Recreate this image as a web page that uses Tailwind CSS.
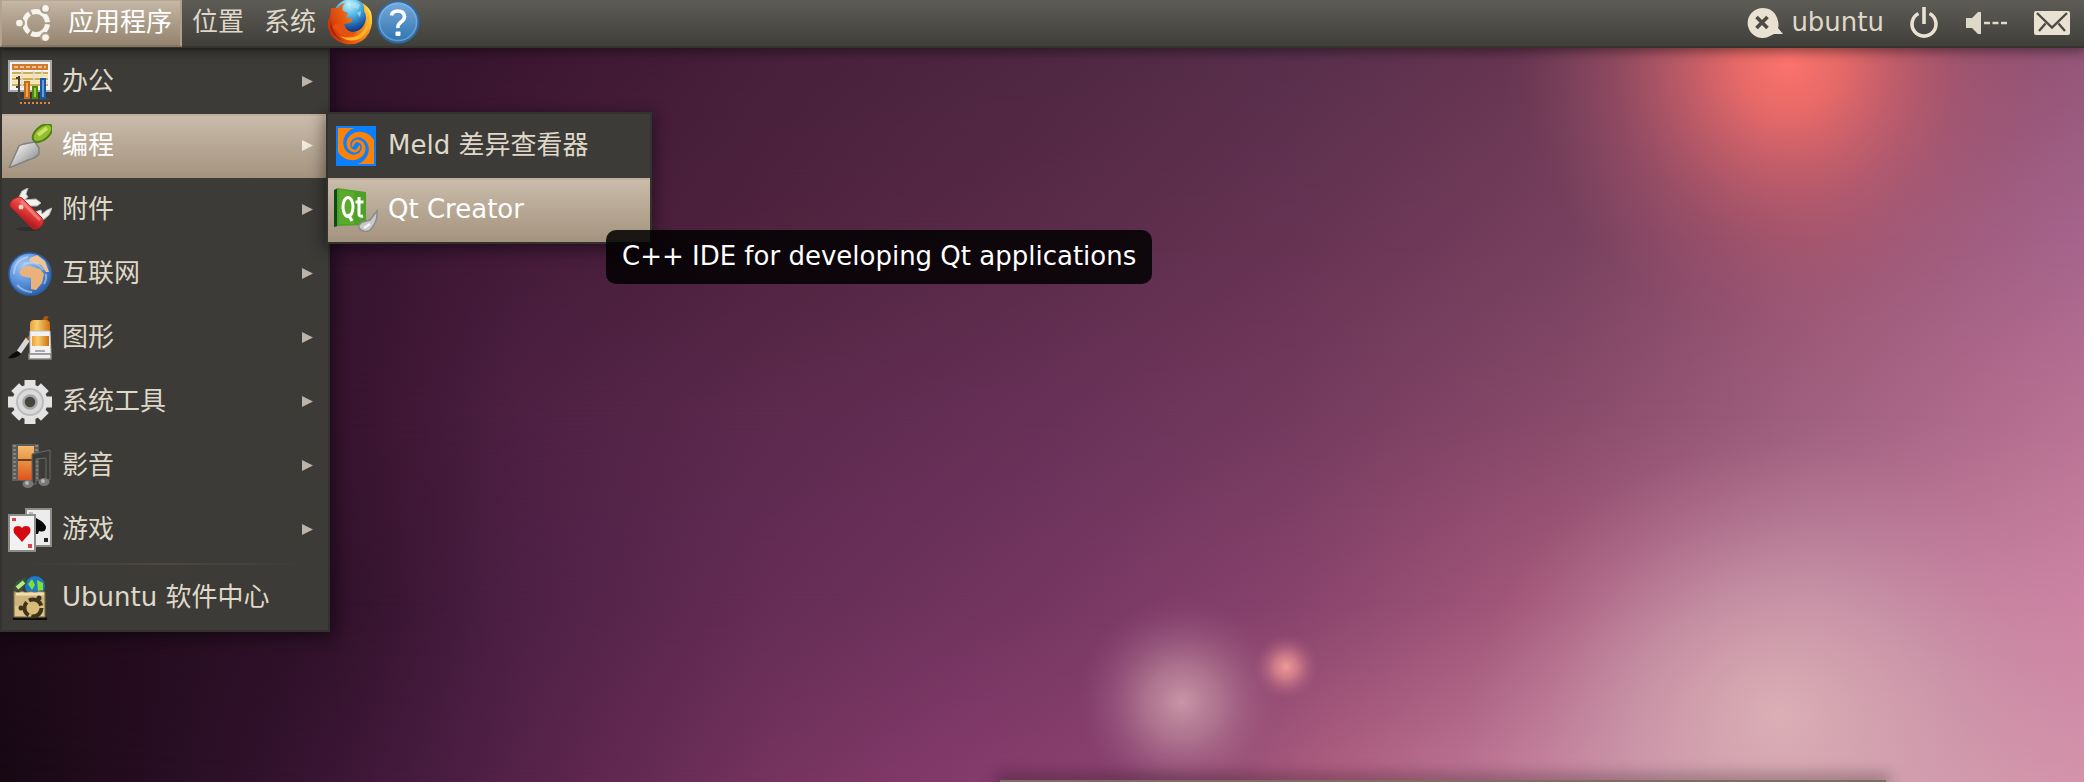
<!DOCTYPE html>
<html lang="zh-CN">
<head>
<meta charset="utf-8">
<title>Ubuntu</title>
<script src="https://cdn.jsdelivr.net/npm/@tailwindcss/browser@4"></script>
</head>
<body class="relative flex min-h-screen flex-col overflow-hidden bg-[#1a0a15] font-['DejaVu_Sans','Noto_Sans_CJK_SC',sans-serif] text-[26px] leading-8 text-[#dfd8c8]">

<!-- wallpaper: horizontal colour bands that fade into each other downwards -->
<div class="absolute inset-0" aria-hidden="true">
  <div class="absolute inset-0 bg-[linear-gradient(90deg,#260d20_0%,#30112a_16%,#3c1731_25%,#47203c_37%,#4f2742_50%,#582f4c_62%,#653450_72%,#804860_80%,#8c4c68_90%,#955578_100%)]"></div>
  <div class="absolute inset-0 bg-[linear-gradient(90deg,#260d20_0%,#34132d_16%,#441b39_25%,#50233f_37%,#5a2b49_50%,#663353_62%,#76405e_75%,#9a5470_87%,#a5648c_100%)] [mask-image:linear-gradient(180deg,transparent_6%,black_30%)]"></div>
  <div class="absolute inset-0 bg-[linear-gradient(90deg,#230c1e_0%,#36132e_16%,#4e2042_25%,#5c2a4d_37%,#673157_50%,#743a5e_62%,#884a6a_75%,#a06080_87%,#b97294_100%)] [mask-image:linear-gradient(180deg,transparent_30%,black_53%)]"></div>
  <div class="absolute inset-0 bg-[linear-gradient(90deg,#1c0917_0%,#30112a_16%,#4e2045_25%,#652d57_37%,#753662_50%,#87436c_62%,#a5597b_74%,#bb7c98_87%,#cd84a3_100%)] [mask-image:linear-gradient(180deg,transparent_53%,black_77%)]"></div>
  <div class="absolute inset-0 bg-[linear-gradient(90deg,#170813_0%,#32122d_13%,#55224a_25%,#75335f_37%,#843b6c_46%,#8b4370_54%,#b06082_64%,#c4809c_74%,#d8a2b0_85%,#d393aa_100%)] [mask-image:linear-gradient(180deg,transparent_77%,black_100%)]"></div>
  <svg class="absolute inset-0 size-full" viewBox="0 0 2084 782" preserveAspectRatio="none">
    <defs>
      <radialGradient id="glowRed"><stop offset="0" stop-color="#fc736b"/><stop offset=".2" stop-color="#f26d68" stop-opacity=".88"/><stop offset=".4" stop-color="#df666a" stop-opacity=".62"/><stop offset=".65" stop-color="#c45c6a" stop-opacity=".3"/><stop offset="1" stop-color="#a8546a" stop-opacity="0"/></radialGradient>
      <radialGradient id="glowPale"><stop offset="0" stop-color="#dcb0b6" stop-opacity=".95"/><stop offset=".45" stop-color="#d0a3b0" stop-opacity=".58"/><stop offset=".75" stop-color="#c998aa" stop-opacity=".2"/><stop offset="1" stop-color="#c58fa6" stop-opacity="0"/></radialGradient>
      <radialGradient id="orb"><stop offset="0" stop-color="#c896a6"/><stop offset=".35" stop-color="#b98299" stop-opacity=".75"/><stop offset=".7" stop-color="#a4678a" stop-opacity=".35"/><stop offset="1" stop-color="#8f4c78" stop-opacity="0"/></radialGradient>
      <radialGradient id="spark"><stop offset="0" stop-color="#f09a98"/><stop offset=".35" stop-color="#e08a90" stop-opacity=".75"/><stop offset="1" stop-color="#a8587e" stop-opacity="0"/></radialGradient>
    </defs>
    <ellipse cx="1788" cy="62" rx="265" ry="270" fill="url(#glowRed)"/>
    <ellipse cx="1780" cy="715" rx="310" ry="270" fill="url(#glowPale)"/>
    <ellipse cx="1182" cy="702" rx="105" ry="105" fill="url(#orb)"/>
    <circle cx="1286" cy="667" r="33" fill="url(#spark)"/>
  </svg>
</div>

<header class="relative z-30 flex h-12 items-center justify-between border-b-2 border-[#35342f] bg-linear-to-b from-[#5d5c56] to-[#403f3a] shadow-[0_2px_10px_2px_rgba(0,0,0,0.4)]">
  <nav class="flex h-12 items-center" aria-label="面板">
    <button class="flex h-12 items-center gap-4 border-2 border-r-[#b09f89] border-b-[#85765f] border-l-[#b3a38c] border-t-[#b8a892] bg-linear-to-b from-[#c5b7a5] to-[#93836f] pr-2 pl-3.5 whitespace-nowrap text-white">
      <svg class="size-9" viewBox="0 0 36 36">
        <circle cx="20" cy="18" r="11.500" fill="none" stroke="#f7f4ee" stroke-width="5" stroke-dasharray="21.580 2.500" stroke-dashoffset="-1.250"/>
        <g fill="#ada08d"><circle cx="4" cy="18" r="5"/><circle cx="29" cy="4" r="5"/><circle cx="29" cy="32" r="5"/></g>
        <g fill="#f7f4ee"><circle cx="3.400" cy="18" r="3.300"/><circle cx="29.500" cy="3.400" r="3.300"/><circle cx="29.500" cy="32.600" r="3.300"/></g>
      </svg>
      <span class="pb-0.5">应用程序</span>
    </button>
    <button class="px-[10px] pb-0.5 whitespace-nowrap">位置</button>
    <button class="px-[10px] pb-0.5 whitespace-nowrap">系统</button>
    <button class="pb-0.5" aria-label="Firefox">
      <svg class="size-12" viewBox="0 0 48 48">
        <defs>
          <radialGradient id="ffGlobe" cx=".45" cy=".15" r=".85"><stop offset="0" stop-color="#c9f3fb"/><stop offset=".35" stop-color="#55bbe6"/><stop offset=".7" stop-color="#1e62ae"/><stop offset="1" stop-color="#0c1f5c"/></radialGradient>
          <linearGradient id="ffFur" x1="0" y1=".7" x2="1" y2=".3"><stop offset="0" stop-color="#c72f06"/><stop offset=".45" stop-color="#ea5f12"/><stop offset=".8" stop-color="#f79a1e"/><stop offset="1" stop-color="#ffe14d"/></linearGradient>
        </defs>
        <circle cx="25" cy="19" r="18" fill="url(#ffGlobe)"/>
        <path d="M5 10 4 19Q1 24 2 29 5 43 20 46 36 48 43 35 48 25 45 14 42 8 36 5 39 9 38 13 42 19 38 27 34 34 26 34 17 33 18 26L24 25Q27 23 26 21L20 19 22 15 17 13Q15 9 19 5 14 6 12 10 8 10 5 10Z" fill="url(#ffFur)"/>
        <path d="M41 13Q44 28 34 36 26 42 14 38 24 46 35 40 46 31 43 17Z" fill="#fbb32a"/>
        <path d="M5 20Q4 34 17 43 7 39 4 29Z" fill="#a91f05"/>
        <path d="M18 26Q12 24 7 28 10 35 19 38 27 39 31 34 21 36 18 26Z" fill="#e8520f"/>
        <path d="M24 4Q30 3 34 7L32 11 26 9ZM31 15 35 13 34 19Z" fill="#aee6f7" opacity=".7"/>
      </svg>
    </button>
    <button class="pb-0.5" aria-label="帮助">
      <svg class="h-11 w-12" viewBox="0 0 48 44">
        <defs><linearGradient id="helpFill" x1="0" y1="0" x2="0" y2="1"><stop offset="0" stop-color="#78aadd"/><stop offset="1" stop-color="#2d74ad"/></linearGradient></defs>
        <circle cx="24" cy="22" r="20.500" fill="url(#helpFill)" stroke="#2c6aa5" stroke-width="2"/>
        <circle cx="24" cy="22" r="18.600" fill="none" stroke="#8fbbe6" stroke-opacity=".5" stroke-width="1.600"/>
        <path d="M17.500 15.500Q18 11 24 11T30.500 16.500Q30.500 19.500 27 22T24 28" fill="none" stroke="#fff" stroke-width="3.600"/>
        <rect x="21.500" y="31.500" width="5" height="4.500" rx="1" fill="#fff"/>
      </svg>
    </button>
  </nav>

  <div class="flex h-12 items-center pr-3.5 text-[#dfd8c8]">
    <button class="flex items-center gap-2">
      <svg class="h-8 w-9" viewBox="0 0 36 32"><path d="M15 1A15 15 0 1 0 21 30Q25 28 27 27H36L31 21Q32 18 31 14 28 1 15 1Z" fill="#e9e2d2"/><path d="m9.500 10 11 11m0-11-11 11" stroke="#4b4a44" stroke-width="3.600"/></svg>
      <span class="pb-0.5">ubuntu</span>
    </button>
    <button class="ml-6" aria-label="关机">
      <svg class="h-8 w-8" viewBox="0 0 32 32" fill="none" stroke="#e9e2d2" stroke-width="3.600"><path d="M10.500 6.500A12 12 0 1 0 21.500 6.500"/><path d="M16 0V17"/></svg>
    </button>
    <button class="ml-[26px]" aria-label="音量">
      <svg class="h-6 w-11" viewBox="0 0 44 24"><path d="M0 7H6L12 1H15V23H12L6 17H0Z" fill="#dfd8c8"/><path d="M18 12H41" stroke="#dfd8c8" stroke-width="2.500" stroke-dasharray="6 2.500"/></svg>
    </button>
    <button class="ml-6" aria-label="邮件">
      <svg class="h-6 w-9" viewBox="0 0 36 24"><rect width="36" height="24" rx="2" fill="#e9e2d2"/><path d="m3 2 15 14.500L33 2M5 20l6.500-7.500M31 20l-6.500-7.500" fill="none" stroke="#4b4a44" stroke-width="2.400"/></svg>
    </button>
  </div>
</header>

<main class="relative z-20 flex-1">
  <ul role="menu" class="relative w-[330px] border-2 border-[#33322e] bg-[#3c3b37] shadow-[2px_4px_14px_2px_rgba(0,0,0,0.45)]">
    <li role="none"><button role="menuitem" class="flex h-16 w-full items-center gap-2.5 pr-3.5 pl-1.5">
      <svg class="size-11" viewBox="0 0 44 44"><rect x="1" y="1" width="42" height="30" fill="#f4f4f2" stroke="#a9a9a9" stroke-width="2"/><rect x="4" y="4" width="36" height="6" fill="#d07a30"/><path d="M6 7h32" stroke="#ecc096" stroke-width="2" stroke-dasharray="4 2"/><path d="M4 13h36M4 19h36M4 25h36" stroke="#c9ae55" stroke-width="2"/><path d="M4 16h36M4 22h36" stroke="#fbe0a8" stroke-width="3"/><path d="M14 10v18M26 10v12M34 10v8" stroke="#ddd" stroke-width="1.500"/><path d="M11 16v23h31M8 18h3M8 27h3M8 35h3" fill="none" stroke="#44443f" stroke-width="2"/><path d="M17 22h4v16h-4z" fill="#f0a850" stroke="#c96a18" stroke-width="2"/><path d="M25 27h4v11h-4z" fill="#9ac840" stroke="#4a8a10" stroke-width="2"/><path d="M33 19h4v19h-4z" fill="#6c9cd8" stroke="#1858a8" stroke-width="2"/><path d="M12 43h30" stroke="#d98a40" stroke-width="2" stroke-dasharray="2 2"/></svg>
      <span class="pb-0.5">办公</span><svg class="ml-auto size-3" viewBox="0 0 12 12"><path d="M0 0 11 5.500 0 11Z" fill="#bcb5a7"/></svg>
    </button></li>
    <li role="none"><button role="menuitem" aria-expanded="true" class="flex h-16 w-[324px] items-center gap-2.5 bg-linear-to-b from-[#cbbdac] to-[#a3937e] pr-3 pl-1.5 text-white shadow-[inset_0_2px_#bfae9b]">
      <svg class="size-11" viewBox="0 0 44 44"><defs><linearGradient id="blade" x1="0" y1="0" x2="1" y2="1"><stop offset=".2" stop-color="#eee"/><stop offset="1" stop-color="#777"/></linearGradient></defs><path d="M29 20 27 12" stroke="#999" stroke-width="3"/><path d="M1 44 11 22Q13 20 27 18L31 24V30Q28 34 20 36Z" fill="url(#blade)" stroke="#808080" stroke-width="1.500"/><ellipse cx="34.500" cy="9" rx="11.500" ry="6.500" transform="rotate(-40 34.500 9)" fill="#93bf2c" stroke="#4f7f12" stroke-width="2"/><path d="m30 11 9-7" stroke="#cbe26a" stroke-width="4"/></svg>
      <span class="pb-0.5">编程</span><svg class="ml-auto size-3" viewBox="0 0 12 12"><path d="M0 0 11 5.500 0 11Z" fill="#eee9e0"/></svg>
    </button></li>
    <li role="none"><button role="menuitem" class="flex h-16 w-full items-center gap-2.5 pr-3.5 pl-1.5">
      <svg class="size-11" viewBox="0 0 44 44"><defs><linearGradient id="knife" x1=".7" y1=".2" x2=".3" y2=".8"><stop offset="0" stop-color="#f06a60"/><stop offset=".5" stop-color="#dc3434"/><stop offset="1" stop-color="#9c1018"/></linearGradient></defs><ellipse cx="20" cy="41" rx="12" ry="2" fill="#31302c"/><path d="M11 9 14 3 20 0 18 6 20 9 15 13ZM15 12 28 11 33 15 29 18 20 18ZM27 24 33 22 34 26 39 22 44 20 41 27 34 33Z" fill="#f1f1f1" stroke="#b5b5b5"/><path d="M8 10Q2 12 2 18L24 40Q29 43 33 38 37 34 34 30L14 10Q11 8 8 10Z" fill="url(#knife)" stroke="#c02026"/><path d="m13 13 19 19" stroke="#f69088" stroke-width="3" opacity=".7"/><circle cx="13" cy="19" r="2.500" fill="#fbd0c8"/></svg>
      <span class="pb-0.5">附件</span><svg class="ml-auto size-3" viewBox="0 0 12 12"><path d="M0 0 11 5.500 0 11Z" fill="#bcb5a7"/></svg>
    </button></li>
    <li role="none"><button role="menuitem" class="flex h-16 w-full items-center gap-2.5 pr-3.5 pl-1.5">
      <svg class="size-11" viewBox="0 0 44 44"><defs><radialGradient id="sea" cx=".35" cy=".3" r=".8"><stop offset="0" stop-color="#a5c8f5"/><stop offset=".5" stop-color="#5b93dd"/><stop offset="1" stop-color="#2358a5"/></radialGradient></defs><circle cx="22" cy="22" r="21" fill="url(#sea)" stroke="#2e5fa8" stroke-width="1.600"/><path d="M12 19Q14 14 22 14L32 17 36 22 34 31 28 38 23 37 23 26 14 24Q11 22 12 19Z" fill="#eab27a"/><path d="M22 6 29 3 37 9 41 20 38 20 33 13 26 11 21 9Z" fill="#eec497"/><path d="M6 22Q6 8 20 5M36 32Q39 27 38 22M9 33Q16 40 24 40M16 12Q28 8 35 18" fill="none" stroke="#d5e5fa" stroke-width="2" opacity=".5"/></svg>
      <span class="pb-0.5">互联网</span><svg class="ml-auto size-3" viewBox="0 0 12 12"><path d="M0 0 11 5.500 0 11Z" fill="#bcb5a7"/></svg>
    </button></li>
    <li role="none"><button role="menuitem" class="flex h-16 w-full items-center gap-2.5 pr-3.5 pl-1.5">
      <svg class="size-11" viewBox="0 0 44 44"><defs><linearGradient id="tube"><stop offset="0" stop-color="#f0a030"/><stop offset=".35" stop-color="#f8cd70"/><stop offset="1" stop-color="#d0700f"/></linearGradient></defs><path d="M0 42Q5 36 11 35L13 38Q8 43 0 42Z" fill="#0b0b0b"/><path d="m11 36 9-13" stroke="#d8d8d8" stroke-width="5"/><path d="m20 24 6-8M36 5l3-5" stroke="#a8580c" stroke-width="4"/><path d="M25 4h14q3 1 3 4v8H22V8q0-3 3-4Z" fill="url(#tube)"/><path d="M22 15h20l1 23H22z" fill="#f2f2f2" stroke="#bbb"/><path d="M24 20h17v10H24z" fill="url(#tube)"/><path d="M27 35h10" stroke="#aaa" stroke-width="2"/><path d="M21 38h22v5H21z" fill="#eee" stroke="#888" stroke-width="1.500"/></svg>
      <span class="pb-0.5">图形</span><svg class="ml-auto size-3" viewBox="0 0 12 12"><path d="M0 0 11 5.500 0 11Z" fill="#bcb5a7"/></svg>
    </button></li>
    <li role="none"><button role="menuitem" class="flex h-16 w-full items-center gap-2.5 pr-3.5 pl-1.5">
      <svg class="size-11" viewBox="0 0 44 44"><g fill="#e3e3e3"><path d="M16.500 0H27.500V44H16.500Z"/><path d="M16.500 1H27.500V43H16.500Z" transform="rotate(45 22 22)"/><path d="M16.500 0H27.500V44H16.500Z" transform="rotate(90 22 22)"/><path d="M16.500 1H27.500V43H16.500Z" transform="rotate(135 22 22)"/><circle cx="22" cy="22" r="17.500"/></g><circle cx="22" cy="22" r="13" fill="#dadada" stroke="#bcbcbc" stroke-width="2"/><circle cx="22" cy="22" r="6.500" fill="#45443f" stroke="#a5a5a5" stroke-width="2.500"/></svg>
      <span class="pb-0.5">系统工具</span><svg class="ml-auto size-3" viewBox="0 0 12 12"><path d="M0 0 11 5.500 0 11Z" fill="#bcb5a7"/></svg>
    </button></li>
    <li role="none"><button role="menuitem" class="flex h-16 w-full items-center gap-2.5 pr-3.5 pl-1.5">
      <svg class="size-11" viewBox="0 0 44 44"><defs><linearGradient id="film" x1="0" y1="0" x2="0" y2="1"><stop offset="0" stop-color="#f2bd6c"/><stop offset=".5" stop-color="#e88a3c"/><stop offset="1" stop-color="#e0521c"/></linearGradient></defs><path d="M4 0H31V37H4Z" fill="#5e5d59"/><path d="M6.500 1v36M28.500 1v36" stroke="#8d8b85" stroke-width="2.500" stroke-dasharray="2 2"/><path d="M10 2H26V36H10Z" fill="url(#film)"/><path d="M10 16h16" stroke="#6a4020" stroke-width="2"/><path d="M24 10 42 6V36H38V14L28 15V40H24Z" fill="#3a3a38" stroke="#6a6a6a"/><ellipse cx="20" cy="40" rx="5.500" ry="4" fill="#777"/><ellipse cx="36" cy="38" rx="5.500" ry="4" fill="#777"/><circle cx="19" cy="39" r="2" fill="#b5b5b5"/><circle cx="35" cy="37" r="2" fill="#b5b5b5"/></svg>
      <span class="pb-0.5">影音</span><svg class="ml-auto size-3" viewBox="0 0 12 12"><path d="M0 0 11 5.500 0 11Z" fill="#bcb5a7"/></svg>
    </button></li>
    <li role="none"><button role="menuitem" class="flex h-16 w-full items-center gap-2.5 pr-3.5 pl-1.5">
      <svg class="size-11" viewBox="0 0 44 44"><path d="M18 1H43V38H18Z" fill="#ececec" stroke="#8c8c88" stroke-width="2"/><path d="M21 4h4v2h-4z" fill="#bbb"/><path d="M28 10Q38 15 38 20 37 25 31 23L30 26H26V12Z" fill="#080808"/><path d="M36 30h4v4h-4z" fill="#222"/><path d="M1 7H27V43H1Z" fill="#f2f2f2" stroke="#8c8c88" stroke-width="2"/><path d="M4 10h4v3H4zM20 36h4v4h-4z" fill="#e04040"/><path d="M14 34 6 25Q4 18 10 18 13 18 14 20 15 18 18 18 24 18 22 25Z" fill="#d40a12"/></svg>
      <span class="pb-0.5">游戏</span><svg class="ml-auto size-3" viewBox="0 0 12 12"><path d="M0 0 11 5.500 0 11Z" fill="#bcb5a7"/></svg>
    </button></li>
    <li role="separator" class="mx-4 my-px h-0.5 bg-linear-to-r from-transparent via-[#4f4741] to-transparent"></li>
    <li role="none"><button role="menuitem" class="flex h-16 w-full items-center gap-2.5 pr-3.5 pl-1.5">
      <svg class="size-11" viewBox="0 0 44 44"><circle cx="27" cy="10" r="10" fill="#1c78c8"/><path d="M20 8 24 3 27 9 24 14ZM29 4 35 7 35 14 30 15Z" fill="#7de032"/><path d="M5 14 8 6 17 1 19 7 13 15Z" fill="#39523a"/><path d="M9 12 16 6" stroke="#b4ec80" stroke-width="4"/><path d="M5 43H39" stroke="#0c0c0c" stroke-width="3"/><path d="M6 15 10 17 14 15 18 17 23 15 27 17 31 15 37 16V41H6Z" fill="#cdb57c" stroke="#7c683c"/><path d="M8 18H36" stroke="#f0dfae" stroke-width="3"/><path d="M7 30V40H36V30Z" fill="#dcc68c"/><circle cx="25" cy="32" r="8.500" fill="#d8bd78" stroke="#40331c" stroke-width="4" stroke-dasharray="15 2.800"/><circle cx="13" cy="32" r="2.500" fill="#40331c"/><circle cx="31" cy="22" r="2.500" fill="#40331c"/></svg>
      <span class="pb-0.5">Ubuntu 软件中心</span>
    </button></li>

    <!-- submenu of 编程 -->
    <li role="none" class="absolute top-[62px] left-[324px] w-[326px]">
      <ul role="menu" class="border-2 border-[#33322e] bg-[#3c3b37] shadow-[0_4px_14px_2px_rgba(0,0,0,0.45)]">
        <li role="none"><button role="menuitem" class="flex h-16 w-full items-center gap-2.5 pl-1.5 whitespace-nowrap">
          <svg class="size-11" viewBox="0 0 44 44"><rect x="2" y="2" width="40" height="40" fill="#0a80ff"/><g fill="#ff8206"><path id="arm" d="M4 4H20.400A16 16 0 0 0 10.700 12.600 13 13 0 0 0 10 23 11 11 0 0 0 15.600 29.600 9 9 0 0 0 22.700 30.100 7 7 0 0 0 27.100 26.200 6 6 0 0 0 27.400 21.500 5 5 0 0 0 24.800 18.600 4 4 0 0 0 21.700 18.400L18.400 23.200A4 4 0 0 1 17.800 19.900 5 5 0 0 1 20.200 16.600 6.500 6.500 0 0 1 25.200 15.800 8 8 0 0 1 30.100 19.400 10 10 0 0 1 31.300 26.700 12 12 0 0 1 25.900 34.100 14 14 0 0 1 15 35.800 17 17 0 0 1 4 28Z"/><use href="#arm" transform="rotate(180 22 22)"/></g></svg>
          <span class="pb-0.5">Meld 差异查看器</span>
        </button></li>
        <li role="none"><button role="menuitem" aria-describedby="tip" class="flex h-16 w-full items-center gap-2.5 bg-linear-to-b from-[#cbbdac] to-[#a3937e] pl-1.5 whitespace-nowrap text-white shadow-[inset_0_2px_#bfae9b]">
          <svg class="size-11" viewBox="0 0 44 44"><path d="M0 2 4 0V38L0 39Z" fill="#0c4a14"/><path d="M3 0 32 4V37L3 38Z" fill="#4fa026"/><path d="M5 2 20 4V36H5Z" fill="#66b432" opacity=".5"/><g fill="none" stroke="#fff" stroke-width="3"><ellipse cx="14" cy="19" rx="5" ry="9.500"/><path d="m14 26 4 7M25 9v17q0 3 4 2M21.500 14h8"/></g><path d="M43 23Q44 34 36 42 30 46 25 40 24 36 29 34L36 32Z" fill="#c9c9c9" stroke="#8a8a8a" stroke-width="1.500"/><path d="m30 40 6-4" stroke="#f4f4f4" stroke-width="2.500"/></svg>
          <span class="pb-0.5">Qt Creator</span>
        </button></li>
      </ul>
    </li>
  </ul>

  <div id="tip" role="tooltip" class="absolute top-[182px] left-[606px] rounded-[10px] bg-black/85 px-4 pt-2.5 pb-3 whitespace-nowrap text-white">C++ IDE for developing Qt applications</div>
</main>

<!-- top edge of the window peeking in from below -->
<footer class="relative z-10 mr-[198px] ml-[1000px] h-0.5 bg-[#7d6d62] shadow-[0_0_16px_4px_rgba(0,0,0,0.4)]"></footer>
</body>
</html>
